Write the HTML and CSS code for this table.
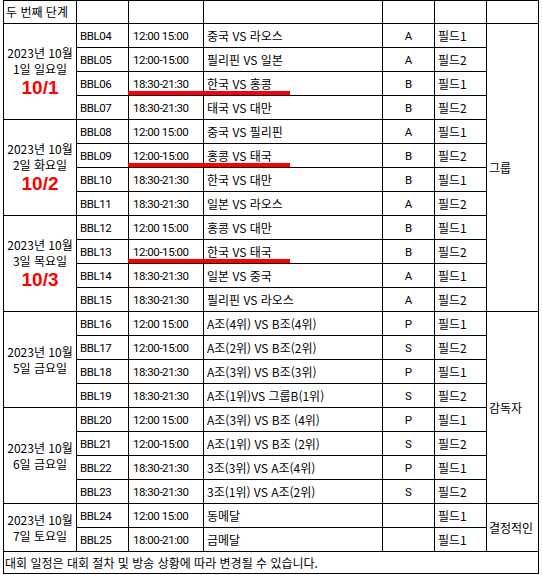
FILE: index.html
```html
<!DOCTYPE html>
<html lang="ko">
<head>
<meta charset="utf-8">
<link rel="stylesheet" href="styles.css">
</head>
<body>
<table class="sched">
  <colgroup>
    <col class="c-date"><col class="c-code"><col class="c-time"><col class="c-match"><col class="c-grp"><col class="c-field"><col class="c-note">
  </colgroup>
  <tr class="head">
    <td class="h">두 번째 단계</td><td></td><td></td><td></td><td></td><td></td><td></td>
  </tr>
  <tr>
    <td class="date" rowspan="4"><div>2023년 10월</div><div>1일 일요일</div><div class="big">10/1</div></td>
    <td class="lat">BBL04</td><td class="lat t">12:00 15:00</td><td>중국 VS 라오스</td><td class="ctr">A</td><td>필드1</td>
    <td class="note" rowspan="12">그룹</td>
  </tr>
  <tr><td class="lat">BBL05</td><td class="lat t">12:00-15:00</td><td>필리핀 VS 일본</td><td class="ctr">A</td><td>필드2</td></tr>
  <tr><td class="lat">BBL06</td><td class="lat t">18:30-21:30<span class="mark"></span></td><td>한국 VS 홍콩</td><td class="ctr">B</td><td>필드1</td></tr>
  <tr><td class="lat">BBL07</td><td class="lat t">18:30-21:30</td><td>태국 VS 대만</td><td class="ctr">B</td><td>필드2</td></tr>
  <tr>
    <td class="date" rowspan="4"><div>2023년 10월</div><div>2일 화요일</div><div class="big">10/2</div></td>
    <td class="lat">BBL08</td><td class="lat t">12:00 15:00</td><td>중국 VS 필리핀</td><td class="ctr">A</td><td>필드1</td>
  </tr>
  <tr><td class="lat">BBL09</td><td class="lat t">12:00-15:00<span class="mark"></span></td><td>홍콩 VS 태국</td><td class="ctr">B</td><td>필드2</td></tr>
  <tr><td class="lat">BBL10</td><td class="lat t">18:30-21:30</td><td>한국 VS 대만</td><td class="ctr">B</td><td>필드1</td></tr>
  <tr><td class="lat">BBL11</td><td class="lat t">18:30-21:30</td><td>일본 VS 라오스</td><td class="ctr">A</td><td>필드2</td></tr>
  <tr>
    <td class="date" rowspan="4"><div>2023년 10월</div><div>3일 목요일</div><div class="big">10/3</div></td>
    <td class="lat">BBL12</td><td class="lat t">12:00 15:00</td><td>홍콩 VS 대만</td><td class="ctr">B</td><td>필드1</td>
  </tr>
  <tr><td class="lat">BBL13</td><td class="lat t">12:00-15:00<span class="mark"></span></td><td>한국 VS 태국</td><td class="ctr">B</td><td>필드2</td></tr>
  <tr><td class="lat">BBL14</td><td class="lat t">18:30-21:30</td><td>일본 VS 중국</td><td class="ctr">A</td><td>필드1</td></tr>
  <tr><td class="lat">BBL15</td><td class="lat t">18:30-21:30</td><td>필리핀 VS 라오스</td><td class="ctr">A</td><td>필드2</td></tr>
  <tr>
    <td class="date" rowspan="4"><div>2023년 10월</div><div>5일 금요일</div></td>
    <td class="lat">BBL16</td><td class="lat t">12:00 15:00</td><td>A조(4위) VS B조(4위)</td><td class="ctr">P</td><td>필드1</td>
    <td class="note" rowspan="8">감독자</td>
  </tr>
  <tr><td class="lat">BBL17</td><td class="lat t">12:00-15:00</td><td>A조(2위) VS B조(2위)</td><td class="ctr">S</td><td>필드2</td></tr>
  <tr><td class="lat">BBL18</td><td class="lat t">18:30-21:30</td><td>A조(3위) VS B조(3위)</td><td class="ctr">P</td><td>필드1</td></tr>
  <tr><td class="lat">BBL19</td><td class="lat t">18:30-21:30</td><td>A조(1위)VS 그룹B(1위)</td><td class="ctr">S</td><td>필드2</td></tr>
  <tr>
    <td class="date" rowspan="4"><div>2023년 10월</div><div>6일 금요일</div></td>
    <td class="lat">BBL20</td><td class="lat t">12:00 15:00</td><td>A조(3위) VS B조 (4위)</td><td class="ctr">P</td><td>필드1</td>
  </tr>
  <tr><td class="lat">BBL21</td><td class="lat t">12:00-15:00</td><td>A조(1위) VS B조 (2위)</td><td class="ctr">S</td><td>필드2</td></tr>
  <tr><td class="lat">BBL22</td><td class="lat t">18:30-21:30</td><td>3조(3위) VS A조(4위)</td><td class="ctr">P</td><td>필드1</td></tr>
  <tr><td class="lat">BBL23</td><td class="lat t">18:30-21:30</td><td>3조(1위) VS A조(2위)</td><td class="ctr">S</td><td>필드2</td></tr>
  <tr>
    <td class="date" rowspan="2"><div>2023년 10월</div><div>7일 토요일</div></td>
    <td class="lat">BBL24</td><td class="lat t">12:00 15:00</td><td>동메달</td><td class="ctr"></td><td>필드1</td>
    <td class="note" rowspan="2">결정적인</td>
  </tr>
  <tr><td class="lat">BBL25</td><td class="lat t">18:00-21:00</td><td>금메달</td><td class="ctr"></td><td>필드1</td></tr>
  <tr class="foot"><td colspan="7">대회 일정은 대회 절차 및 방송 상황에 따라 변경될 수 있습니다.</td></tr>
</table>
</body>
</html>
```
FILE: styles.css
```css
html, body {
  margin: 0;
  padding: 0;
  background: #fff;
}
body {
  padding: 0 0 0 3px;
  font-family: "Noto Sans CJK KR", "Noto Sans", sans-serif;
  font-size: 12px;
  color: #000;
}
.sched {
  border-collapse: collapse;
  table-layout: fixed;
  width: 536px;
}
.c-date { width: 73px; }
.c-code { width: 52px; }
.c-time { width: 75px; }
.c-match { width: 179px; }
.c-grp { width: 52px; }
.c-field { width: 52px; }
.c-note { width: 52px; }

.sched td {
  border: 1px solid #000;
  height: 23px;
  padding: 0 3px;
  line-height: 16px;
  vertical-align: middle;
  white-space: nowrap;
  overflow: visible;
}
.sched .head td { height: 22px; }
.sched .head td.h { padding-left: 2px; }
.sched td.lat {
  font-family: Roboto, "Noto Sans CJK KR", sans-serif;
  font-size: 11.5px;
  letter-spacing: -0.45px;
}
.sched td.t {
  position: relative;
  padding-left: 4px;
}
.sched td.ctr {
  text-align: center;
  font-family: Roboto, "Noto Sans CJK KR", sans-serif;
  font-size: 11.5px;
}
.sched td.date {
  text-align: center;
  padding: 0;
}
.big {
  font-family: "Liberation Sans", Arial, sans-serif;
  font-weight: bold;
  font-size: 19px;
  line-height: 22px;
  color: #ff0000;
}
.sched td.note {
  padding-left: 2px;
}
.mark {
  position: absolute;
  left: -1px;
  bottom: 0;
  width: 162px;
  height: 4px;
  background: #ff0000;
}
.sched .foot td {
  height: 21px;
  padding-left: 1px;
}
```
